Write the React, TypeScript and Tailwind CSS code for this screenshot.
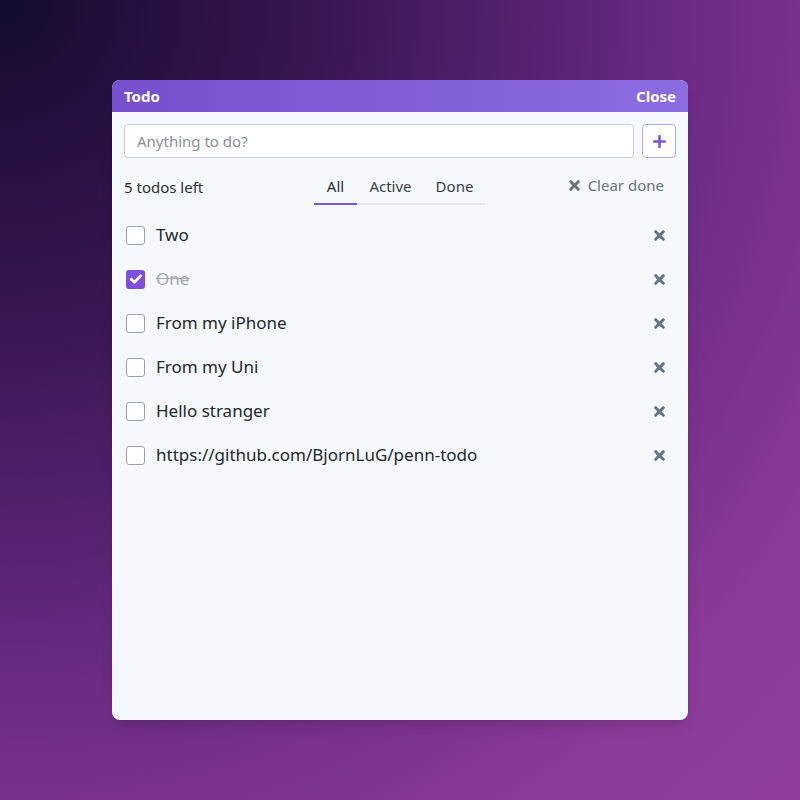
import { useState } from 'react'

type Todo = { id: number; text: string; done: boolean }

const initial: Todo[] = [
  { id: 1, text: 'Two', done: false },
  { id: 2, text: 'One', done: true },
  { id: 3, text: 'From my iPhone', done: false },
  { id: 4, text: 'From my Uni', done: false },
  { id: 5, text: 'Hello stranger', done: false },
  { id: 6, text: 'https://github.com/BjornLuG/penn-todo', done: false },
]

const tabs = [
  { name: 'All', width: 'w-[43px]' },
  { name: 'Active', width: 'w-[67px]' },
  { name: 'Done', width: 'w-[61px]' },
] as const

function Cross({ className = '' }: { className?: string }) {
  return (
    <svg viewBox="0 0 12 12" className={className} aria-hidden>
      <path d="M2.5 2.5l7 7M9.5 2.5l-7 7" stroke="currentColor" strokeWidth="2.8" strokeLinecap="round" />
    </svg>
  )
}

export default function App() {
  const [todos, setTodos] = useState(initial)
  const [tab, setTab] = useState<'All' | 'Active' | 'Done'>('All')
  const left = todos.filter((t) => !t.done).length

  const shown = todos.filter((t) => (tab === 'All' ? true : tab === 'Done' ? t.done : !t.done))

  return (
    <div
      className="w-[800px] h-[800px] flex items-start justify-center pt-[80px] bg-[radial-gradient(circle_at_0%_0%,#140b2e_0%,#3b1755_30%,#6a2a84_60%,#8a3a98_84%,#8f3f9b_100%)]"
      style={{ fontFamily: '"Noto Sans", "Open Sans", sans-serif' }}
    >
      <div className="w-[576px] h-[640px] rounded-lg overflow-hidden bg-[#f5f8fc] flex flex-col shadow-lg">
        <div className="h-8 flex items-center justify-between px-3 bg-[linear-gradient(90deg,#7650cf,#8c6de0)] text-white text-[15px] font-bold">
          <span>Todo</span>
          <button>Close</button>
        </div>

        <div className="px-3 pt-3">
          <div className="flex gap-2">
            <input
              placeholder="Anything to do?"
              className="flex-1 h-[34px] rounded border border-[#c9ccd3] bg-white px-3 text-[15px] text-gray-800 placeholder:text-[#8b8f97] outline-none"
            />
            <button className="w-[34px] h-[34px] rounded border border-[#b9a8e6] bg-white flex items-center justify-center text-[#7d56d6]">
              <svg viewBox="0 0 12 12" className="w-[13px] h-[13px]">
                <path d="M6 1v10M1 6h10" stroke="currentColor" strokeWidth="2.4" strokeLinecap="round" />
              </svg>
            </button>
          </div>

          <div className="flex items-center mt-[9px] h-[40px]">
            <span className="w-[190px] text-[15px] text-[#2b2f36]">{left} todos left</span>
            <div className="flex">
              {tabs.map((t) => (
                <button
                  key={t.name}
                  onClick={() => setTab(t.name)}
                  className={
                    t.width +
                    ' h-[36px] text-[15px] border-b-2 ' +
                    (tab === t.name ? 'border-[#7d56d6] text-[#2b2f36]' : 'border-[#e3e6ec] text-[#3a3f47]')
                  }
                >
                  {t.name}
                </button>
              ))}
            </div>
            <button
              onClick={() => setTodos(todos.filter((t) => !t.done))}
              className="ml-auto mr-3 flex items-center gap-[7px] text-[15px] text-[#6b7280] -mt-[3px]"
            >
              <Cross className="w-[13px] h-[13px] text-[#6b7280]" />
              Clear done
            </button>
          </div>

          <ul className="mt-[6px]">
            {shown.map((t) => (
              <li key={t.id} className="h-11 flex items-center">
                <button
                  onClick={() => setTodos(todos.map((x) => (x.id === t.id ? { ...x, done: !x.done } : x)))}
                  className={
                    'ml-[2px] w-[19px] h-[19px] rounded-[3px] flex items-center justify-center ' +
                    (t.done ? 'bg-[#7d4fdb]' : 'border border-[#9aa0a8] bg-white')
                  }
                >
                  {t.done && (
                    <svg viewBox="0 0 12 12" className="w-[14px] h-[14px]">
                      <path d="M2 6.3l2.6 2.6 5.3-5.6" stroke="white" strokeWidth="2.4" fill="none" strokeLinecap="round" strokeLinejoin="round" />
                    </svg>
                  )}
                </button>
                <span
                  className={
                    'ml-[11px] text-[17px] ' + (t.done ? 'line-through text-[#a3a7ae]' : 'text-[#23272e]')
                  }
                >
                  {t.text}
                </span>
                <button
                  onClick={() => setTodos(todos.filter((x) => x.id !== t.id))}
                  className="ml-auto mr-[10px] text-[#64748b]"
                >
                  <Cross className="w-[13px] h-[13px]" />
                </button>
              </li>
            ))}
          </ul>
        </div>
      </div>
    </div>
  )
}
